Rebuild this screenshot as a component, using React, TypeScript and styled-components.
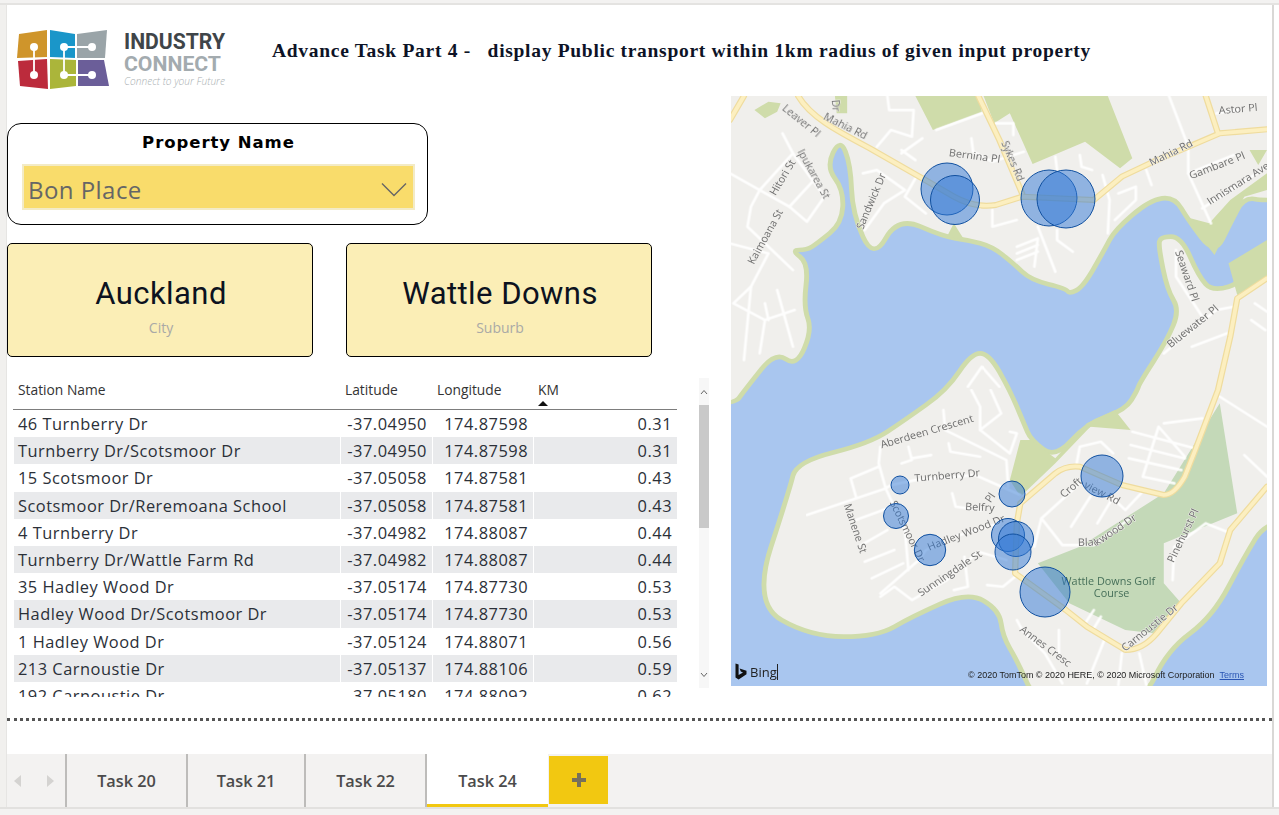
import React from 'react';
import styled, { createGlobalStyle } from 'styled-components';

const GlobalStyle = createGlobalStyle`
  html, body {
    margin: 0;
    padding: 0;
    background: #fff;
    font-family: 'Open Sans', 'Noto Sans', sans-serif;
  }
`;

const Page = styled.div`
  width: 1279px;
  height: 815px;
  display: flex;
  flex-direction: column;
  overflow: hidden;
`;

const TopStrip = styled.div`
  height: 3px;
  flex: none;
  background: #f3f2f1;
  border-bottom: 2px solid #e4e3e1;
`;

const Body = styled.div`
  flex: 1;
  display: flex;
  min-height: 0;
`;

const Gutter = styled.div`
  width: 6px;
  flex: none;
  background: #f1f0ee;
`;

const Canvas = styled.div`
  flex: 1;
  display: flex;
  flex-direction: column;
  background: #fff;
  border-left: 1px solid #e6e5e3;
  border-right: 2px solid #d9d8d6;
`;

const RightEdge = styled.div`
  width: 5px;
  flex: none;
  background: #fff;
`;

const Header = styled.header`
  height: 91px;
  flex: none;
  display: flex;
  align-items: flex-start;
  padding-left: 9px;
`;

const LogoWrap = styled.svg`
  width: 225px;
  height: 70px;
  margin-top: 21px;
  flex: none;
`;

const Title = styled.h1`
  margin: 31px 0 0 31px;
  font: bold 19.5px/30px 'Liberation Serif', serif;
  letter-spacing: 0.7px;
  color: #0d1326;
  white-space: pre;
`;

const Main = styled.div`
  flex: none;
  height: 590px;
  display: flex;
`;

const LeftColumn = styled.div`
  width: 724px;
  flex: none;
  display: flex;
  flex-direction: column;
`;

const Slicer = styled.section`
  box-sizing: border-box;
  width: 421px;
  height: 102px;
  margin-top: 27px;
  padding: 8px 12px 0 14px;
  border: 1.5px solid #000;
  border-radius: 14px;
`;

const SlicerTitle = styled.div`
  font: bold 16.5px/22px 'DejaVu Sans', 'Liberation Sans', sans-serif;
  letter-spacing: 0.95px;
  text-align: center;
  color: #000;
`;

const Dropdown = styled.div`
  box-sizing: border-box;
  height: 46px;
  margin-top: 10px;
  padding: 4px 6px 0 4px;
  display: flex;
  align-items: center;
  justify-content: space-between;
  background: #f9dc6b;
  border: 2px solid #f3ebc6;
  font-size: 24px;
  letter-spacing: 0.45px;
  color: #666;
`;

const CardRow = styled.div`
  display: flex;
  gap: 33px;
  margin-top: 18px;
`;

const Card = styled.div`
  box-sizing: border-box;
  width: 306px;
  height: 114px;
  padding: 29px 0 0 2px;
  background: #fbeeb6;
  border: 1px solid #000;
  border-radius: 5px;
  text-align: center;
`;

const CardValue = styled.div`
  font: 400 31px/42px Roboto, sans-serif;
  letter-spacing: 0.45px;
  color: #0c1220;
`;

const CardLabel = styled.div`
  margin-top: 3px;
  font: 400 14px/20px 'Open Sans', sans-serif;
  color: #a9a9a6;
`;

const TableRow = styled.div`
  flex: 1;
  display: flex;
  margin-top: 23px;
  min-height: 0;
  padding-left: 6px;
`;

const TableClip = styled.div`
  width: 664px;
  height: 317px;
  overflow: hidden;
  flex: none;
`;

const GridRow = styled.div<{ $striped?: boolean; $head?: boolean }>`
  display: grid;
  grid-template-columns: 327px 92px 101px 144px;
  height: ${(p) => (p.$head ? '30px' : '27.2px')};
  background: ${(p) => (p.$striped ? '#e9eaec' : '#fff')};
  box-sizing: border-box;
  border-bottom: ${(p) => (p.$head ? '1px solid #7d7d7d' : 'none')};
`;

const HeadCell = styled.div`
  position: relative;
  padding-left: 5px;
  font-size: 13.8px;
  line-height: 20px;
  color: #333;
`;

const SortMark = styled.span`
  position: absolute;
  left: 5px;
  top: 21px;
  width: 0;
  height: 0;
  border-left: 5px solid transparent;
  border-right: 5px solid transparent;
  border-bottom: 5px solid #111;
`;

const Cell = styled.div<{ $right?: boolean }>`
  padding: 0 5px 0 ${(p) => (p.$right ? '5px' : '4px')};
  text-align: ${(p) => (p.$right ? 'right' : 'left')};
  font-size: 16.4px;
  line-height: 28.4px;
  letter-spacing: 0.5px;
  color: #2b3038;
  white-space: nowrap;
  border-left: 1px solid #fff;
`;

const Scrollbar = styled.div`
  width: 10px;
  height: 310px;
  margin: -2px 0 0 22px;
  flex: none;
  display: flex;
  flex-direction: column;
  background: #f7f7f7;
`;

const ScrollButton = styled.div<{ $end?: boolean }>`
  height: 27px;
  flex: none;
  display: flex;
  justify-content: center;
  align-items: center;
  ${(p) => (p.$end ? 'margin-top: auto;' : '')}
`;

const ScrollThumb = styled.div`
  height: 123px;
  background: #c9c9c9;
`;

const MapFrame = styled.div`
  position: relative;
  width: 536px;
  height: 590px;
  flex: none;
  overflow: hidden;
  background: #a9c6ef;
`;

const MapArt = styled.svg`
  display: block;
  width: 100%;
  height: 100%;
`;

const MapBubbles = styled.svg`
  position: absolute;
  inset: 0;
  width: 100%;
  height: 100%;
`;

const BingMark = styled.div`
  position: absolute;
  left: 4px;
  bottom: 6px;
  display: flex;
  align-items: center;
  gap: 3px;
  font-size: 13px;
  line-height: 16px;
  color: #222;
`;

const BingWord = styled.span`
  border-right: 1px solid #222;
`;

const Attribution = styled.div`
  position: absolute;
  right: 23px;
  bottom: 5px;
  display: flex;
  gap: 5px;
  font: 8.97px/12px 'Liberation Sans', Arial, sans-serif;
  color: #222;
  white-space: nowrap;
`;

const TermsLink = styled.span`
  color: #2a56b5;
  text-decoration: underline;
`;

const DottedLine = styled.div`
  margin-top: 32px;
  height: 0;
  border-top: 3px dotted #555;
`;

const TabBar = styled.nav`
  margin-top: auto;
  height: 53px;
  flex: none;
  display: flex;
  background: #f3f2f1;
`;

const TabArrows = styled.div`
  width: 58px;
  flex: none;
  display: flex;
  align-items: center;
  justify-content: space-between;
  padding: 0 11px 0 7px;
  box-sizing: border-box;
`;

const Tab = styled.div<{ $active?: boolean; $width: number }>`
  box-sizing: border-box;
  width: ${(p) => p.$width}px;
  flex: none;
  display: flex;
  align-items: center;
  justify-content: center;
  border-left: 2px solid #bdbcba;
  font-size: 16.3px;
  font-weight: 600;
  color: #4b4b4b;
  background: ${(p) => (p.$active ? '#fff' : 'transparent')};
  box-shadow: ${(p) => (p.$active ? 'inset 0 -3px 0 #f2c811' : 'none')};
`;

const AddTab = styled.div`
  width: 59px;
  height: 48px;
  margin: 2px 0 0 1px;
  flex: none;
  display: flex;
  align-items: center;
  justify-content: center;
  background: #f2c811;
`;

const BottomStrip = styled.div`
  height: 8px;
  flex: none;
  background: #f3f2f1;
  border-top: 2px solid #e2e1df;
  box-sizing: border-box;
`;

const stations = [
  ['46 Turnberry Dr', '-37.04950', '174.87598', '0.31'],
  ['Turnberry Dr/Scotsmoor Dr', '-37.04950', '174.87598', '0.31'],
  ['15 Scotsmoor Dr', '-37.05058', '174.87581', '0.43'],
  ['Scotsmoor Dr/Reremoana School', '-37.05058', '174.87581', '0.43'],
  ['4 Turnberry Dr', '-37.04982', '174.88087', '0.44'],
  ['Turnberry Dr/Wattle Farm Rd', '-37.04982', '174.88087', '0.44'],
  ['35 Hadley Wood Dr', '-37.05174', '174.87730', '0.53'],
  ['Hadley Wood Dr/Scotsmoor Dr', '-37.05174', '174.87730', '0.53'],
  ['1 Hadley Wood Dr', '-37.05124', '174.88071', '0.56'],
  ['213 Carnoustie Dr', '-37.05137', '174.88106', '0.59'],
  ['192 Carnoustie Dr', '-37.05180', '174.88092', '0.62'],
];

// page coords, the bubbles layer has its viewBox at the map's corner
const bubbles = [
  [947, 189, 26],
  [955, 200, 24.5],
  [1049, 198, 28],
  [1066, 199, 29],
  [900, 485, 9],
  [896, 516, 12.5],
  [1012, 494, 13],
  [1102, 476, 21],
  [930, 550, 15.7],
  [1008, 535, 16.5],
  [1016, 539, 17.5],
  [1013, 552, 18],
  [1045, 592, 25],
];

const upperLabels: [string, number, number, number][] = [
  ['Mahia Rd', 265, 88, 27],
  ['Mahia Rd', 1205, 228, -27],
  ['Sykes Rd', 775, 158, 68],
  ['Bernina Pl', 625, 198, 8],
  ['Astor Pl', 1398, 72, -5],
  ['Leaver Pl', 148, 58, 40],
  ['Dr', 292, 30, 85],
  ['Ipukarea St', 192, 185, 62],
  ['Hitori St', 130, 318, -60],
  ['Kaimoana St', 68, 525, -62],
  ['Sandwick Dr', 380, 420, -68],
  ['Gambare Pl', 1318, 268, -22],
  ['Innismara Ave', 1372, 345, -33],
  ['Seaward Pl', 1272, 485, 72],
  ['Bluewater Pl', 1260, 775, -40],
];

const lowerLabels: [string, number, number, number][] = [
  ['Aberdeen Crescent', 434, 175, -17],
  ['Turnberry Dr', 528, 275, -5],
  ['Belfry', 672, 360, 3],
  ['Pl', 745, 340, -55],
  ['Croft', 955, 325, -42],
  ['view Rd', 1010, 292, 28],
  ['Blac', 995, 468, -2],
  ['kwood Dr', 1050, 468, -35],
  ['Manene St', 325, 345, 72],
  ['Scotsmoor Dr', 456, 338, 65],
  ['Hadley Wood Dr', 570, 482, -22],
  ['Sunningdale St', 546, 620, -35],
  ['Annes Cresc', 826, 722, 38],
  ['Carnoustie Dr', 1130, 785, -40],
  ['Pinehurst Pl', 1268, 520, -65],
];

const upperRoads = [
  'M150,130 L180,190 L85,300 L60,350 L50,410 L110,470 L180,540',
  'M180,190 L270,320 L220,395 L170,350 L240,270',
  'M0,250 L85,300 L170,350',
  'M0,460 L110,490 L60,590 L10,640 L100,690 L185,660',
  'M60,590 L40,810 M100,640 L110,690 M135,600 L180,770 M100,690 L85,790',
  'M420,170 L460,120 L520,140 L525,60 L455,60 L450,18',
  'M490,190 L550,145 M530,210 L490,180',
  'M380,250 L420,240 L500,300 L440,340 L385,420',
  'M500,320 L560,370 M530,265 L500,320',
  'M590,120 L720,70 M760,100 L810,100 L810,135',
  'M690,145 L695,185 L750,215 L840,185',
  'M750,360 L750,410 L820,390',
  'M1000,195 L1005,230 L1035,240 M930,200 L935,240',
  'M880,410 L930,545 M820,470 L880,445 M820,490 L880,465 M820,510 L880,485 M880,445 L870,530',
  'M935,420 L935,450 L980,485',
  'M1065,255 L1085,330 L1080,430 M1110,310 L1160,290 L1160,330 L1100,390',
  'M1190,240 L1205,285 M1255,18 L1310,170 L1310,250 L1375,400',
  'M1310,250 L1440,195 M1350,355 L1535,230',
  'M1390,70 L1450,60',
  'M1240,790 L1390,660 L1440,650 M1275,480 L1275,560 L1350,680',
  'M1320,770 L1420,730 M1490,690 L1530,720 M1500,640 L1535,665',
  'M680,890 L720,830 L770,890',
];

const lowerRoads = [
  'M690,0 L715,50 L715,120 L775,70 L745,0',
  'M610,60 L615,120 L790,210 L795,290',
  'M715,120 L800,190 L820,130 L800,125',
  'M430,170 L425,220 L445,295 L500,420 L510,540',
  'M510,170 L520,210 L490,220 M520,205 L575,195',
  'M625,160 L630,185 L715,200',
  'M345,265 L425,230 M345,265 L360,320 M220,375 L445,295 L460,285 L530,270 L700,255 L830,315',
  'M360,390 L450,355 M375,465 L450,420 M385,515 L470,480 M405,565 L495,520',
  'M430,610 L540,510 L560,480 L640,440 L770,400',
  'M430,620 L470,590 L520,630 L620,570 L710,485 L790,510',
  'M635,310 L645,350 L720,360',
  'M640,600 L680,590 L670,500',
  'M735,585 L780,590 L815,560',
  'M990,225 L1000,170 L1060,155 L1095,190',
  'M890,385 L1000,280 M890,385 L870,470 M890,385 L950,465 L1040,465 L1150,380',
  'M975,410 L1030,320 M1050,400 L1090,330',
  'M1175,310 L1130,360 L1090,320',
  'M1150,125 L1330,175 M1145,165 L1300,205 M1140,205 L1290,240 M1180,260 L1270,280',
  'M1225,110 L1180,260 M1225,110 L1300,200 M1240,100 L1350,85',
  'M1400,20 L1535,110 M1470,195 L1535,260',
  'M1420,425 L1360,400 L1270,470 L1265,570',
  'M1015,700 L1040,660 M1040,715 L1060,680',
  'M1070,750 L1020,880 M1120,790 L1110,885 M1170,790 L1190,885',
  'M820,690 L835,720 L900,790 L950,880 M940,720 L940,800',
];

const northShore = [
  [-1000, -1000], [3000, -1000], [3000, 335], [1535, 335], [1470, 320], [1430, 400], [1385, 495], [1310, 390], [1270, 320],
  [1200, 330], [1100, 420], [1070, 480], [1010, 590], [970, 612], [960, 595], [860, 570], [810, 520], [750, 470],
  [680, 450], [610, 440], [480, 380], [410, 510], [350, 370], [345, 225], [315, 145], [275, 230], [325, 300], [320, 400],
  [250, 460], [220, 480], [175, 480], [225, 520], [210, 650], [235, 720], [190, 830], [130, 785], [50, 890], [0, 960], [-1000, 1000],
];

const southShore = [
  [690, -110], [740, -110], [800, 0], [840, 100], [860, 150], [930, 205], [1020, 100], [1130, 60], [1165, 0], [1170, -20],
  [1250, -150], [1285, -240], [1250, -300], [1225, -430], [1230, -460], [1290, -460], [1340, -340], [1380, -295], [1470, -325],
  [1425, -380], [1700, -450], [1700, 390], [1535, 390], [1470, 500], [1380, 680], [1250, 780], [1175, 950], [880, 950], [820, 810],
  [780, 740], [770, 660], [680, 605], [520, 680], [420, 740], [230, 740], [65, 640], [170, 300], [190, 215], [400, 160], [500, 90], [620, 0],
];

// rounds a coastline: each vertex becomes the control point between midpoints
const smooth = (pts: number[][]) => {
  const mid = (a: number[], b: number[]) => `${(a[0] + b[0]) / 2},${(a[1] + b[1]) / 2}`;
  let d = `M${mid(pts[pts.length - 1], pts[0])}`;
  pts.forEach((p, i) => {
    d += ` Q${p[0]},${p[1]} ${mid(p, pts[(i + 1) % pts.length])}`;
  });
  return `${d} Z`;
};

const MAHIA = 'M195,18 C230,80 300,120 400,175 L550,265 L640,320 Q700,355 760,345 L835,320 L1040,330 L1120,260 L1200,220 L1300,175 L1400,130 L1535,118';
const SIDE_ROADS = 'M710,18 L770,150 L835,310 M1360,18 L1395,130 M0,90 L40,18';
const CARNOUSTIE = 'M1535,565 L1450,625 L1430,740 L1395,900 L1330,1080 L1300,1160 Q1270,1215 1240,1215 L1120,1185 L1000,1130 Q960,1125 930,1150 L830,1240 L820,1300 L815,1450 L960,1560 L1020,1610 L1130,1680 Q1180,1680 1220,1630 L1290,1540 L1400,1420 L1430,1320 L1535,1190';

const Logo: React.FC = () => (
  <LogoWrap viewBox="16 26 225 70">
    <path d="M19 34 L47 30 L47 57 L17 58 Z" fill="#cf952b" />
    <path d="M50 30 L75 34 L75 58 L50 57 Z" fill="#1a96c9" />
    <path d="M77 34 L107 30 L105 58 L77 58 Z" fill="#9aa4a8" />
    <path d="M18 61 L47 59 L48 89 L20 86 Z" fill="#bc2b3c" />
    <path d="M50 59 L76 60 L76 86 L50 89 Z" fill="#abb53a" />
    <path d="M78 60 L104 60 L109 86 L78 86 Z" fill="#6b5e99" />
    <g fill="#fff">
      <path d="M34 47 V75 M64 47 H92 M64 47 V75 H92" fill="none" stroke="#fff" strokeWidth="1.8" />
      <circle cx="34" cy="47" r="4" />
      <circle cx="34" cy="75" r="4" />
      <circle cx="64" cy="47" r="4" />
      <circle cx="64" cy="75" r="4" />
      <circle cx="92" cy="47" r="4" />
      <circle cx="92" cy="75" r="4" />
    </g>
    <text x="124" y="49" fontFamily="Roboto, sans-serif" fontWeight="700" fontSize="22.5" textLength="101" lengthAdjust="spacingAndGlyphs" fill="#3f4549">
      INDUSTRY
    </text>
    <text x="124" y="71" fontFamily="Roboto, sans-serif" fontWeight="700" fontSize="21" textLength="97" lengthAdjust="spacingAndGlyphs" fill="#a3abaf">
      CONNECT
    </text>
    <text x="124" y="85" fontFamily="'Open Sans', sans-serif" fontStyle="italic" fontWeight="300" fontSize="10.5" textLength="101" lengthAdjust="spacingAndGlyphs" fill="#a9afb2">
      Connect to your Future
    </text>
  </LogoWrap>
);

const RoadLabels: React.FC<{ items: [string, number, number, number][] }> = ({ items }) => (
  <g fontFamily="'Open Sans', sans-serif" fontSize="31" fill="#6f6f6f" stroke="#f0efec" strokeWidth="3" paintOrder="stroke">
    {items.map(([text, x, y, angle]) => (
      <text key={text + x} x={x} y={y} transform={`rotate(${angle} ${x} ${y})`}>
        {text}
      </text>
    ))}
  </g>
);

const MapDrawing: React.FC = () => (
  <MapArt viewBox="3 18 1532 1770" preserveAspectRatio="none">
    <rect x="0" y="0" width="1600" height="1800" fill="#a9c6ef" />
    <path d={smooth(northShore)} fill="#f0efec" stroke="#cfdcaa" strokeWidth="14" />
    <g transform="translate(0,900)">
      <path d={smooth(southShore)} fill="#f0efec" stroke="#cfdcaa" strokeWidth="14" />
      <path d="M880,520 L1000,470 L1240,310 L1400,40 L1450,370 L1380,400 L1240,460 L1240,580 L1290,640 L1210,730 L1130,720 L970,640 Z" fill="#c4d9b8" />
      <path d="M800,270 L830,150 L860,150 L930,205 L1020,100 L1100,60 L1145,120 L1030,110 L930,220 L830,320 Z" fill="#cfdcaa" />
    </g>
    <path d="M530,18 L580,120 L720,65 L710,18 Z M725,18 L1080,18 L1150,205 L1115,235 L1015,155 L865,222 L800,70 L755,100 Z" fill="#cfdcaa" />
    <path d="M70,60 L110,35 L145,40 L135,65 L100,85 Z M300,18 L335,18 L335,70 L305,70 Z M1485,180 L1535,180 L1510,225 Z" fill="#cfdcaa" />
    <path d="M1425,520 L1535,450 L1535,560 L1450,615 Z M1300,380 L1385,495 L1430,400 L1470,320 L1535,300 L1535,250 L1430,330 L1370,400 Z" fill="#cfdcaa" />
    <path d="M620,440 L640,400 L670,450 Z" fill="#cfdcaa" />
    <g fill="none" stroke="#fff" strokeWidth="8" strokeLinejoin="round" strokeLinecap="round" opacity="0.9">
      {upperRoads.map((d) => (
        <path key={d} d={d} />
      ))}
      <g transform="translate(0,900)">
        {lowerRoads.map((d) => (
          <path key={d} d={d} />
        ))}
      </g>
    </g>
    <g fill="none" strokeLinejoin="round" strokeLinecap="round">
      <g stroke="#efdc9e" strokeWidth="18">
        <path d={MAHIA} />
        <path d={SIDE_ROADS} />
        <path d={CARNOUSTIE} />
      </g>
      <g stroke="#fcefc0" strokeWidth="11">
        <path d={MAHIA} />
        <path d={SIDE_ROADS} />
        <path d={CARNOUSTIE} />
      </g>
    </g>
    <RoadLabels items={upperLabels} />
    <g transform="translate(0,900)">
      <RoadLabels items={lowerLabels} />
      <g fontFamily="'Open Sans', sans-serif" fontSize="31" fill="#47705a">
        <text x="948" y="585">Wattle Downs Golf</text>
        <text x="1040" y="620">Course</text>
      </g>
    </g>
  </MapArt>
);

const Chevron: React.FC<{ up?: boolean }> = ({ up }) => (
  <svg width="8" height="6" viewBox="0 0 8 6">
    <path d={up ? 'M1 5 L4 1.5 L7 5' : 'M1 1 L4 4.5 L7 1'} fill="none" stroke="#666" strokeWidth="1" />
  </svg>
);

const App: React.FC = () => {
  return (
    <Page>
      <GlobalStyle />
      <TopStrip />
      <Body>
        <Gutter />
        <Canvas>
          <Header>
            <Logo />
            <Title>{'Advance Task Part 4 -   display Public transport within 1km radius of given input property'}</Title>
          </Header>
          <Main>
            <LeftColumn>
              <Slicer>
                <SlicerTitle>Property Name</SlicerTitle>
                <Dropdown>
                  Bon Place
                  <svg width="26" height="15" viewBox="0 0 26 15">
                    <path d="M1 1.5 L13 13.5 L25 1.5" fill="none" stroke="#666" strokeWidth="1.4" />
                  </svg>
                </Dropdown>
              </Slicer>
              <CardRow>
                <Card>
                  <CardValue>Auckland</CardValue>
                  <CardLabel>City</CardLabel>
                </Card>
                <Card>
                  <CardValue>Wattle Downs</CardValue>
                  <CardLabel>Suburb</CardLabel>
                </Card>
              </CardRow>
              <TableRow>
                <TableClip>
                  <GridRow $head>
                    <HeadCell>Station Name</HeadCell>
                    <HeadCell>Latitude</HeadCell>
                    <HeadCell>Longitude</HeadCell>
                    <HeadCell>
                      KM
                      <SortMark />
                    </HeadCell>
                  </GridRow>
                  {stations.map((row, i) => (
                    <GridRow key={row[0]} $striped={i % 2 === 1}>
                      <Cell>{row[0]}</Cell>
                      <Cell $right>{row[1]}</Cell>
                      <Cell $right>{row[2]}</Cell>
                      <Cell $right>{row[3]}</Cell>
                    </GridRow>
                  ))}
                </TableClip>
                <Scrollbar>
                  <ScrollButton>
                    <Chevron up />
                  </ScrollButton>
                  <ScrollThumb />
                  <ScrollButton $end>
                    <Chevron />
                  </ScrollButton>
                </Scrollbar>
              </TableRow>
            </LeftColumn>
            <MapFrame>
              <MapDrawing />
              <MapBubbles viewBox="731 96 536 590">
                {bubbles.map(([cx, cy, r]) => (
                  <circle key={`${cx}-${cy}`} cx={cx} cy={cy} r={r} fill="#2f78d6" fillOpacity="0.5" stroke="#0f4f9f" strokeWidth="1" />
                ))}
              </MapBubbles>
              <BingMark>
                <svg width="12" height="17" viewBox="0 0 12 17">
                  <path d="M0.5 0.5 L3.6 1.6 L3.6 12 L8 9.4 L5.8 8.4 L4.6 5.4 L11.5 7.8 L11.5 11.2 L3.6 16.5 L0.5 14.6 Z" fill="#111" />
                </svg>
                <BingWord>Bing</BingWord>
              </BingMark>
              <Attribution>
                © 2020 TomTom © 2020 HERE, © 2020 Microsoft Corporation
                <TermsLink>Terms</TermsLink>
              </Attribution>
            </MapFrame>
          </Main>
          <DottedLine />
          <TabBar>
            <TabArrows>
              <svg width="8" height="12" viewBox="0 0 8 12">
                <path d="M7 0 L0 6 L7 12 Z" fill="#d4d3d1" />
              </svg>
              <svg width="8" height="12" viewBox="0 0 8 12">
                <path d="M1 0 L8 6 L1 12 Z" fill="#d4d3d1" />
              </svg>
            </TabArrows>
            <Tab $width={121}>Task 20</Tab>
            <Tab $width={118}>Task 21</Tab>
            <Tab $width={121}>Task 22</Tab>
            <Tab $width={123} $active>
              Task 24
            </Tab>
            <AddTab>
              <svg width="16" height="16" viewBox="0 0 16 16">
                <path d="M8 1 V15 M1 8 H15" stroke="#77705a" strokeWidth="4" />
              </svg>
            </AddTab>
          </TabBar>
        </Canvas>
        <RightEdge />
      </Body>
      <BottomStrip />
    </Page>
  );
};

export default App;
